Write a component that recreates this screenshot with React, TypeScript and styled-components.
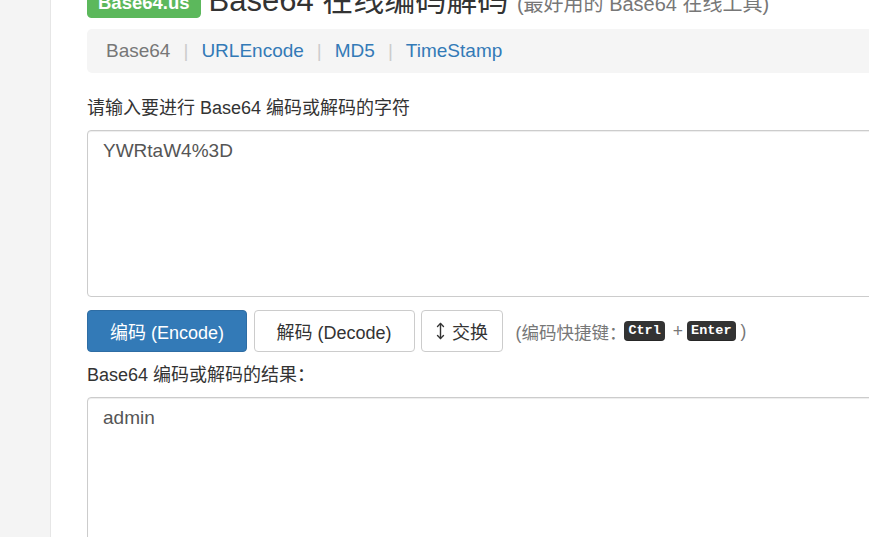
import React from "react";
import styled, { createGlobalStyle } from "styled-components";

const Global = createGlobalStyle`
  html, body {
    margin: 0;
    padding: 0;
    overflow: hidden;
    background: #fff;
  }
  body {
    font-family: "Liberation Sans", "Noto Sans CJK SC", sans-serif;
    color: #333;
  }
  * { box-sizing: border-box; }
`;

const Layout = styled.div`
  display: flex;
  min-height: 100vh;
  width: 1100px;
`;

const Sidebar = styled.aside`
  width: 51px;
  flex-shrink: 0;
  background: #f4f4f4;
  border-right: 1px solid #e6e6e6;
`;

const Main = styled.main`
  width: 1000px;
  flex-shrink: 0;
  padding-left: 36px;
  display: flex;
  flex-direction: column;
`;

const Header = styled.header`
  display: flex;
  align-items: flex-end;
  gap: 8px;
  margin-top: -16px;
`;

const Badge = styled.span`
  display: inline-block;
  background: #5cb85c;
  color: #fff;
  font-weight: 700;
  font-size: 18.5px;
  line-height: 1;
  padding: 3.7px 11px 5.5px;
  border-radius: 4.6px;
  white-space: nowrap;
`;

const Title = styled.h1`
  margin: 0;
  font-size: 31px;
  line-height: 34px;
  font-weight: 400;
  color: #333;
  white-space: nowrap;
`;

const Sub = styled.small`
  font-size: 20px;
  line-height: 1;
  color: #777;
`;

const Breadcrumb = styled.nav`
  display: flex;
  align-items: center;
  height: 44px;
  margin-top: 11px;
  padding: 0 19px;
  background: #f5f5f5;
  border-radius: 5px;
  font-size: 19px;
`;

const Crumb = styled.a<{ $active?: boolean }>`
  color: ${(p) => (p.$active ? "#777" : "#337ab7")};
  text-decoration: none;
`;

const Sep = styled.span`
  color: #ccc;
  margin: 0 13px 0 13px;
`;

const FieldLabel = styled.label<{ $gap: number }>`
  display: block;
  margin-top: ${(p) => p.$gap}px;
  font-size: 18px;
  line-height: 25px;
  color: #333;
`;

const TextBox = styled.textarea`
  display: block;
  width: 100%;
  height: 167px;
  margin-top: 9px;
  padding: 7px 15px;
  border: 1px solid #ccc;
  border-radius: 4px;
  box-shadow: inset 0 1px 1px rgba(0, 0, 0, 0.075);
  font-family: "Liberation Sans", "Noto Sans CJK SC", sans-serif;
  font-size: 19px;
  line-height: 25px;
  color: #555;
  resize: none;
  outline: none;
  background: #fff;
`;

const ButtonRow = styled.div`
  display: flex;
  align-items: center;
  margin-top: 13px;
  gap: 6.5px;
`;

const Button = styled.button<{ $primary?: boolean; $pad?: number }>`
  display: inline-flex;
  align-items: center;
  gap: 7px;
  height: 42px;
  padding: 0 ${(p) => p.$pad ?? 22}px;
  border: 1px solid ${(p) => (p.$primary ? "#2e6da4" : "#ccc")};
  border-radius: 4px;
  background: ${(p) => (p.$primary ? "#337ab7" : "#fff")};
  color: ${(p) => (p.$primary ? "#fff" : "#333")};
  font-family: "Liberation Sans", "Noto Sans CJK SC", sans-serif;
  font-size: 18px;
  white-space: nowrap;
  cursor: pointer;
`;

const Hint = styled.span`
  margin-left: 6px;
  font-size: 17.5px;
  color: #777;
  white-space: nowrap;
  display: inline-flex;
  align-items: center;
`;

const Kbd = styled.kbd`
  display: inline-block;
  margin-left: -2px;
  background: #333;
  color: #fff;
  font-family: "Liberation Mono", "DejaVu Sans Mono", monospace;
  font-weight: 700;
  font-size: 13.5px;
  line-height: 16px;
  padding: 2px 4px;
  border-radius: 4px;
  box-shadow: inset 0 -1px 0 rgba(0, 0, 0, 0.25);
`;

const Plus = styled.span`
  margin: 0 6px 0 8px;
`;

const SwapIcon = () => (
  <svg width="9" height="18" viewBox="0 0 9 18" fill="none" stroke="#333" strokeWidth="1.4" strokeLinecap="round" strokeLinejoin="round">
    <path d="M4.5 1.5V16.5" />
    <path d="M1.5 4.5L4.5 1.5L7.5 4.5" />
    <path d="M1.5 13.5L4.5 16.5L7.5 13.5" />
  </svg>
);

export default function App() {
  return (
    <>
      <Global />
      <Layout>
        <Sidebar />
        <Main>
          <Header>
            <Badge>Base64.us</Badge>
            <Title>
              Base64 在线编码解码 <Sub>(最好用的 Base64 在线工具)</Sub>
            </Title>
          </Header>
          <Breadcrumb>
            <Crumb $active>Base64</Crumb>
            <Sep>|</Sep>
            <Crumb href="#">URLEncode</Crumb>
            <Sep>|</Sep>
            <Crumb href="#">MD5</Crumb>
            <Sep>|</Sep>
            <Crumb href="#">TimeStamp</Crumb>
          </Breadcrumb>
          <FieldLabel $gap={23}>请输入要进行 Base64 编码或解码的字符</FieldLabel>
          <TextBox defaultValue="YWRtaW4%3D" />
          <ButtonRow>
            <Button $primary>编码 (Encode)</Button>
            <Button>解码 (Decode)</Button>
            <Button $pad={14}>
              <SwapIcon />
              交换
            </Button>
            <Hint>
              (编码快捷键：<Kbd>Ctrl</Kbd>
              <Plus>+</Plus>
              <Kbd>Enter</Kbd>
              &nbsp;)
            </Hint>
          </ButtonRow>
          <FieldLabel $gap={11}>Base64 编码或解码的结果：</FieldLabel>
          <TextBox defaultValue="admin" />
        </Main>
      </Layout>
    </>
  );
}
